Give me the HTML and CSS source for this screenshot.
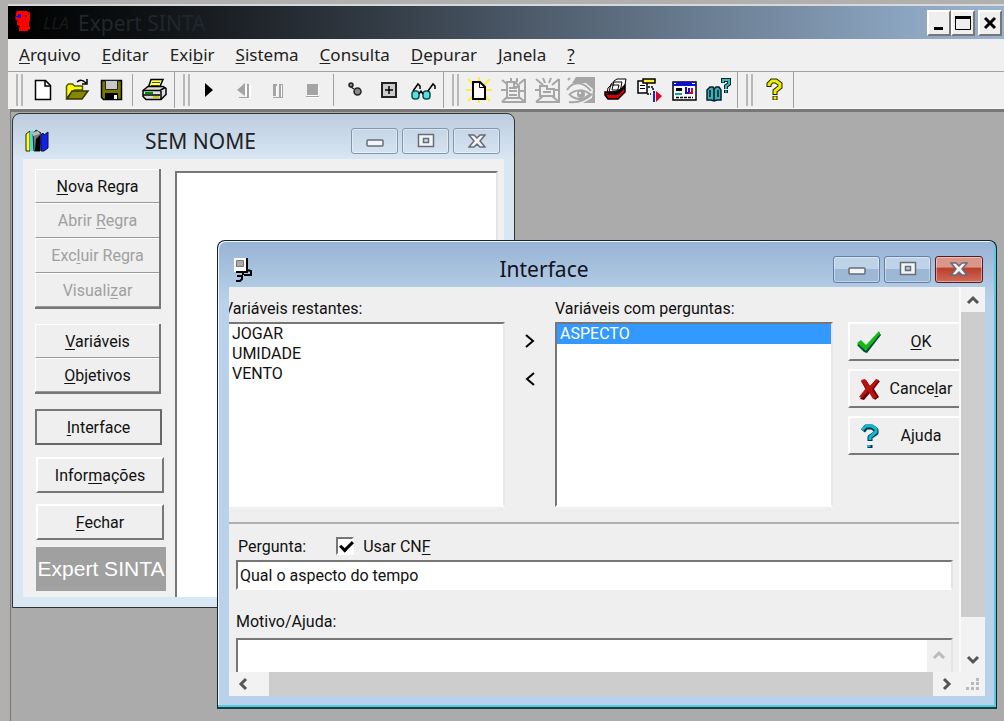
FILE: index.html
```html
<!DOCTYPE html>
<html lang="pt-BR">
<head>
<meta charset="utf-8">
<title>Expert SINTA</title>
<link rel="stylesheet" href="styles.css">
</head>
<body>
<div class="app">
  <header class="app-title">
    <svg class="head-icon" width="20" height="22" viewBox="0 0 20 22" aria-hidden="true"><path fill="#f00" d="M4 1h10l3 2v7l-1 3v3l1 1v2l-3 2H6v-3l1-2-3-1v-3l1-1-3-2 1-3V3z"/><path fill="#20d" d="M2 6h3V4h3v4H5V7H2z"/><path fill="#600" d="M12 5h2v2h-2z"/></svg>
    <span class="app-mark">LLA</span>
    <h1 class="app-name">Expert SINTA</h1>
    <div class="app-controls">
      <button class="sys" aria-label="Minimizar"><svg width="18" height="18" viewBox="0 0 18 18"><path d="M4 13h9v3H4z"/></svg></button>
      <button class="sys" aria-label="Maximizar"><svg width="18" height="18" viewBox="0 0 18 18"><path fill="none" stroke="#000" d="M1.500 3.500h15v12h-15z"/><path d="M1 2h16v3H1z"/></svg></button>
      <button class="sys sys-close" aria-label="Fechar"><svg width="18" height="18" viewBox="0 0 18 18"><path fill="none" stroke="#000" stroke-width="3" d="M4 4l10 10M14 4L4 14"/></svg></button>
    </div>
  </header>
  <nav class="menu">
    <button><u>A</u>rquivo</button>
    <button><u>E</u>ditar</button>
    <button>Exi<u>b</u>ir</button>
    <button><u>S</u>istema</button>
    <button><u>C</u>onsulta</button>
    <button><u>D</u>epurar</button>
    <button><u>J</u>anela</button>
    <button><u>?</u></button>
  </nav>
  <div class="toolbar" role="toolbar">
    <div class="group">
      <span class="grip"></span>
      <button class="tool" aria-label="Novo"><svg width="28" height="28" viewBox="0 0 28 28"><path fill="#fff" stroke="#000" stroke-width="1.500" d="M6.500 4.500h10l5 5v14h-15z"/><path fill="none" stroke="#000" stroke-width="1.500" d="M16 4.500v5.500h5.500"/></svg></button>
      <button class="tool" aria-label="Abrir"><svg width="28" height="28" viewBox="0 0 28 28"><path fill="#ff0" stroke="#550" stroke-width="1.500" d="M3.500 22V10l2-2h4l2 2h8v4h-8z"/><path fill="#880" stroke="#330" stroke-width="1.500" d="M4 23l5-8h16l-6 8z"/><path fill="none" stroke="#000" stroke-width="1.500" d="M14 6c3-3 6-2 9 1m1-4v5h-5"/></svg></button>
      <button class="tool" aria-label="Salvar"><svg width="28" height="28" viewBox="0 0 28 28"><path fill="#770" stroke="#000" stroke-width="1.500" d="M4.500 4.500h20v19h-18l-2-2z"/><path fill="#c8c8c8" stroke="#222" d="M8.500 4.500h12v9h-12z"/><path fill="#000" d="M8 17h13v7H8z"/><path fill="#fff" d="M17 19h3v4h-3z"/></svg></button>
      <span class="sep"></span>
      <button class="tool" aria-label="Imprimir"><svg width="28" height="28" viewBox="0 0 28 28"><path fill="#ff6" stroke="#000" stroke-width="1.500" d="M11 3.500h12l-4 9H8z"/><path stroke="#550" d="M12 6.500h8M11 9.500h8"/><path fill="#ddd" stroke="#000" stroke-width="1.500" d="M3 14.500l5-4h15l3 2v6l-5 5H6l-3-3z"/><path stroke="#000" stroke-width="1.500" fill="none" d="M3 14.500h17l5-3M21 15v8M3 19h17"/><path fill="#080" d="M5 16h8v2H5z"/><path fill="#cc0" d="M13 20h6v2h-6z"/></svg></button>
    </div>
    <div class="group">
      <span class="grip"></span>
      <button class="tool" aria-label="Executar"><svg width="28" height="28" viewBox="0 0 28 28"><path d="M9 7l8 7-8 7z"/></svg></button>
      <button class="tool" aria-label="Voltar" disabled><svg width="28" height="28" viewBox="0 0 28 28"><path fill="#fff" d="M17 9l-8 6 8 6zM18 9h3v14h-3z"/><path fill="#a4a4a4" d="M15 7l-8 7 8 6zM17 8h2v14H9v-1h8z"/></svg></button>
      <button class="tool" aria-label="Pausar" disabled><svg width="28" height="28" viewBox="0 0 28 28"><path fill="#a4a4a4" d="M9 8h4v12H9zM15 8h4v14H9v-1h6z"/><path fill="#fff" d="M12 10h1v10h-1zM17 9h1v12h-1z"/></svg></button>
      <button class="tool" aria-label="Parar" disabled><svg width="28" height="28" viewBox="0 0 28 28"><path fill="#fff" d="M9 10h12v12H9z"/><path fill="#a4a4a4" d="M9 8h11v11H9zM8 20h13v1H8z"/></svg></button>
      <span class="sep"></span>
      <button class="tool" aria-label="Passo"><svg width="28" height="28" viewBox="0 0 28 28"><g fill="#888" stroke="#222" stroke-width="1.500"><circle cx="10" cy="9" r="2"/><path d="M10 11l3 2"/><circle cx="16.500" cy="15.500" r="3.500"/></g></svg></button>
      <button class="tool" aria-label="Adicionar"><svg width="28" height="28" viewBox="0 0 28 28"><path fill="#ccc" stroke="#222" stroke-width="2" d="M7 7h14v14H7z"/><path stroke="#000" stroke-width="1.500" d="M14 10v8M10 14h8"/></svg></button>
      <button class="tool" aria-label="Observar"><svg width="28" height="28" viewBox="0 0 28 28"><g fill="#6dd" stroke="#055" stroke-width="1.500"><rect x="3" y="15" width="7" height="8" rx="3"/><rect x="14" y="15" width="7" height="8" rx="3"/></g><path fill="none" stroke="#000" stroke-width="1.500" d="M4 15l5-7 2 2v3M10 18l2-3 2 3M19 15l5-7 2 2v3"/></svg></button>
    </div>
    <div class="group">
      <span class="grip"></span>
      <button class="tool" aria-label="Nova base"><svg width="28" height="28" viewBox="0 0 28 28"><path stroke="#fe3" stroke-width="2" d="M3 3l22 22M25 3L3 25M14 1v26M1 14h26"/><path fill="#fff" stroke="#000" stroke-width="2" d="M8 6h7l5 5v12H8z"/><path fill="none" stroke="#000" d="M14.500 6v5.500H20"/></svg></button>
      <button class="tool" aria-label="Variáveis" disabled><svg width="28" height="28" viewBox="0 0 28 28"><g fill="none" stroke="#a6a6a6" stroke-width="2"><path d="M3 4l5 4M26 3l-6 5M2 14h6M20 15h6M3 26l5-5M26 26l-6-5M12 2v4M18 2v4M3 26h23V3"/><path d="M8 6h8l4 4v12H8zM10 12h8M10 15h8M10 19h8M15 6v5h5"/></g></svg></button>
      <button class="tool" aria-label="Objetivos" disabled><svg width="28" height="28" viewBox="0 0 28 28"><g fill="none" stroke="#a6a6a6" stroke-width="2"><path d="M3 3l7 6M26 3l-7 6M2 14h5M21 14h5M3 26l7-6M26 26l-7-6M10 2l2 5M18 2l-2 5M3 26h23V3"/><path d="M7 10h7v3h7v7H7zM10 16h8"/></g></svg></button>
      <button class="tool" aria-label="Visualizar" disabled><svg width="30" height="28" viewBox="0 0 30 28"><path fill="#a6a6a6" d="M10 1h19v26H17l9-5 1-9-7-6H6z"/><path fill="none" stroke="#a6a6a6" stroke-width="2" d="M1 14c6-9 16-9 24 1M3 19c6-6 14-6 21-1-7 7-14 6-20 1M3 26c9 1 16-1 23-8M2 4l2-2"/><circle cx="15" cy="18" r="4" fill="#a6a6a6"/><circle cx="14" cy="17" r="1" fill="#fff"/></svg></button>
      <button class="tool" aria-label="Regras"><svg width="28" height="28" viewBox="0 0 28 28"><path fill="#fff" stroke="#000" d="M13 5l3-2h9l-2 11H11zM10 8l3-2h8l-2 10H8zM7 12l3-3h8l-2 8H6z"/><path fill="#d00" stroke="#000" stroke-width="1.500" d="M4 16h13l7-7v7l-7 7H7l-3-4z"/><path stroke="#000" d="M4 18.500h13l7-7"/></svg></button>
      <button class="tool" aria-label="Depurar"><svg width="28" height="28" viewBox="0 0 28 28"><path fill="#fff" stroke="#000" stroke-width="1.500" d="M3 5h9v12H3z"/><path stroke="#000" d="M5 9.500h5M5 12.500h5"/><path fill="#fe3" stroke="#000" stroke-width="1.500" d="M8 3h12v4H8z"/><path fill="none" stroke="#000" stroke-dasharray="2 1" stroke-width="1.500" d="M13 11h5v4M12 18h4"/><path fill="#22c" d="M18 15h2v11h-2z"/><path fill="#d02" d="M21 15l6 5-6 6z"/></svg></button>
      <button class="tool" aria-label="Interface"><svg width="28" height="28" viewBox="0 0 28 28"><path fill="#fff" stroke="#000" stroke-width="1.500" d="M4 6h23v18H4z"/><path fill="#11c" d="M4 6h23v4H4z"/><path stroke="#fff" d="M5 7.500h2M23 7.500h3"/><path fill="#000" d="M7 12h6v3H7z"/><path fill="#0aa" d="M6 17h7v2H6z"/><path fill="none" stroke="#11c" stroke-width="2" d="M17 11v6h3v-5"/><path fill="none" stroke="#d02" stroke-width="2" d="M20 17h3v-5"/><path stroke="#000" stroke-dasharray="3 1" stroke-width="1.500" d="M7 21.500h17"/></svg></button>
      <button class="tool" aria-label="Tópicos"><svg width="28" height="28" viewBox="0 0 28 28"><path fill="#4aa" stroke="#023" stroke-width="1.500" d="M4 24V14l3-3h3l1 2 2-2h3l2 3v10h-4l-3 1-3-1z"/><path stroke="#023" stroke-width="1.500" d="M11 13v11M7 14v7M15 14v7"/><path fill="none" stroke="#022" stroke-width="4" d="M20 7V4h6v4l-3 2v3M23 14v3"/><path fill="none" stroke="#3bb" stroke-width="2" d="M20 6.500V4h6v4l-3 2v3M23 14.500v2"/></svg></button>
    </div>
    <div class="group">
      <span class="grip"></span>
      <button class="tool" aria-label="Ajuda"><svg width="28" height="28" viewBox="0 0 28 28"><path fill="none" stroke="#220" stroke-width="5" d="M10 11V8l3-3h4l4 3v3l-5 4v4M16 20v4"/><path fill="none" stroke="#ee0" stroke-width="3" d="M10 10V8l3-3h4l4 3v3l-5 4v3M16 20.500v3"/></svg></button>
    </div>
  </div>

  <main class="desktop">
    <section class="window base" aria-label="SEM NOME">
      <header class="caption">
        <svg width="27" height="24" viewBox="-1 0 27 24" aria-hidden="true"><path fill="#ff2" stroke="#222" d="M2 5l4-3v20H2z"/><path fill="#4dd" d="M6 2h4v20H6z"/><path fill="#777" stroke="#222" d="M9 5l3-4 5 3-1 18H10z"/><path fill="#bbb" d="M8 4l6-2 2 3-7 2z"/><path fill="#000" d="M12 10l4-4v16h-5z"/><path fill="#12e" stroke="#113" d="M17 6l2-2 1 2 4-3v16l-4 3h-3z"/></svg>
        <h2>SEM NOME</h2>
        <div class="win-controls">
          <button class="wc" aria-label="Minimizar"><svg width="18" height="16" viewBox="0 0 18 16"><rect x="1" y="7" width="16" height="6" rx="1"/></svg></button>
          <button class="wc" aria-label="Maximizar"><svg width="18" height="16" viewBox="0 0 18 16"><path fill-rule="evenodd" d="M1.500 1.500h15v12h-15zM6.500 5.500v4h5v-4z"/></svg></button>
          <button class="wc" aria-label="Fechar"><svg width="18" height="16" viewBox="0 0 18 16"><path d="M1 2h5l3 3 3-3h5l-5 6 5 6h-5l-3-3-3 3H1l5-6z"/></svg></button>
        </div>
      </header>
      <div class="base-client">
        <div class="side">
          <div class="stack">
            <button class="btn"><span><u>N</u>ova Regra</span></button>
            <button class="btn" disabled><span>Abrir <u>R</u>egra</span></button>
            <button class="btn" disabled><span>Exc<u>l</u>uir Regra</span></button>
            <button class="btn" disabled><span>Visuali<u>z</u>ar</span></button>
          </div>
          <div class="stack">
            <button class="btn"><span><u>V</u>ariáveis</span></button>
            <button class="btn"><span><u>O</u>bjetivos</span></button>
          </div>
          <button class="btn btn-focus"><span><u>I</u>nterface</span></button>
          <button class="btn btn-wide"><span>Infor<u>m</u>ações</span></button>
          <button class="btn btn-wide"><span><u>F</u>echar</span></button>
          <div class="brand">Expert SINTA</div>
        </div>
        <div class="rules" role="listbox" aria-label="Regras"></div>
      </div>
    </section>

    <section class="window dialog" aria-label="Interface">
      <header class="caption">
        <svg width="22" height="25" viewBox="0 0 22 25" aria-hidden="true"><path fill="#fff" d="M1 1h12v14H1z"/><path fill="#aaa" stroke="#777" d="M3.500 3.500h7v6h-7z"/><path fill="none" stroke="#000" stroke-width="2" d="M14 1v14H3M10 15v3M4 19h5v3l-2 2H3M14 13l4 1v4h-7"/></svg>
        <h2>Interface</h2>
        <div class="win-controls">
          <button class="wc" aria-label="Minimizar"><svg width="18" height="16" viewBox="0 0 18 16"><rect x="1" y="7" width="16" height="6" rx="1"/></svg></button>
          <button class="wc" aria-label="Maximizar"><svg width="18" height="16" viewBox="0 0 18 16"><path fill-rule="evenodd" d="M1.500 1.500h15v12h-15zM6.500 5.500v4h5v-4z"/></svg></button>
          <button class="wc wc-close" aria-label="Fechar"><svg width="18" height="16" viewBox="0 0 18 16"><path d="M1 2h5l3 3 3-3h5l-5 6 5 6h-5l-3-3-3 3H1l5-6z"/></svg></button>
        </div>
      </header>
      <div class="dialog-client">
        <div class="view">
          <div class="picker">
            <div class="column">
              <span class="label label-cut" id="rest">Variáveis restantes:</span>
              <ul class="list list-cut" role="listbox" aria-labelledby="rest">
                <li role="option">JOGAR</li>
                <li role="option">UMIDADE</li>
                <li role="option">VENTO</li>
              </ul>
            </div>
            <div class="movers">
              <button aria-label="Adicionar"><svg width="12" height="16" viewBox="0 0 12 16"><path d="M2 2l7 6-7 6"/></svg></button>
              <button aria-label="Remover"><svg width="12" height="16" viewBox="0 0 12 16"><path d="M10 2L3 8l7 6"/></svg></button>
            </div>
            <div class="column">
              <span class="label" id="com">Variáveis com perguntas:</span>
              <ul class="list" role="listbox" aria-labelledby="com">
                <li role="option" aria-selected="true">ASPECTO</li>
              </ul>
            </div>
            <div class="actions">
              <button class="action"><svg width="28" height="28" viewBox="0 0 28 28"><path fill="#044" d="M2 17l4-3 5 5L24 4l2 3-14 18-3-1z"/><path fill="#1b1" d="M2 15l4-3 5 5L24 3l1 3-14 17z"/></svg><span><u>O</u>K</span></button>
              <button class="action"><svg width="28" height="28" viewBox="0 0 28 28"><path fill="#600" d="M6 6l5-1 4 6 6-6 4 1-6 8 5 8-4 3-5-7-6 7-4-1 6-9z"/><path fill="#b11" d="M6 5l4-1 5 7 6-7 3 1-7 9 5 8-4 2-5-8-6 7-3-1 7-9z"/></svg><span>Cance<u>l</u>ar</span></button>
              <button class="action"><svg width="28" height="28" viewBox="0 0 28 28"><path fill="none" stroke="#035" stroke-width="5" stroke-linejoin="round" d="M8 9l3-4h6l4 3v3l-6 4v4M15 23v3"/><path fill="none" stroke="#1bc" stroke-width="3" stroke-linejoin="round" d="M7 8l4-4h6l4 3v3l-6 5v3M14 23v2"/></svg><span>Ajuda</span></button>
            </div>
          </div>
          <div class="form">
            <div class="row">
              <label for="pergunta">Pergunta:</label>
              <input class="check" type="checkbox" id="cnf" checked>
              <label for="cnf">Usar CN<u>F</u></label>
            </div>
            <input class="field" type="text" id="pergunta" value="Qual o aspecto do tempo">
            <label class="motive" for="motivo">Motivo/Ajuda:</label>
            <div class="memo">
              <textarea id="motivo"></textarea>
              <button class="arrow arrow-dim" aria-label="Subir texto"><svg width="14" height="10" viewBox="0 0 14 10"><path d="M2 8l5-5 5 5"/></svg></button>
            </div>
          </div>
        </div>
        <div class="vbar">
          <button class="arrow" aria-label="Subir"><svg width="14" height="10" viewBox="0 0 14 10"><path d="M2 8l5-5 5 5"/></svg></button>
          <div class="vthumb"></div>
          <button class="arrow" aria-label="Descer"><svg width="14" height="10" viewBox="0 0 14 10"><path d="M2 2l5 5 5-5"/></svg></button>
        </div>
        <div class="hbar">
          <button class="arrow" aria-label="Esquerda"><svg width="10" height="14" viewBox="0 0 10 14"><path d="M8 2L3 7l5 5"/></svg></button>
          <div class="hthumb"></div>
          <button class="arrow" aria-label="Direita"><svg width="10" height="14" viewBox="0 0 10 14"><path d="M2 2l5 5-5 5"/></svg></button>
        </div>
        <svg class="size-grip" width="14" height="14" viewBox="0 0 14 14" aria-hidden="true"><path fill="#b8b8b8" d="M10 1h3v3h-3zM5 5h3v3H5zM10 5h3v3h-3zM0 10h3v3H0zM5 10h3v3H5zM10 10h3v3h-3z"/></svg>
      </div>
    </section>
  </main>
</div>
</body>
</html>
```
FILE: styles.css
```css
* { box-sizing: border-box; }

body {
  margin: 0;
  min-height: 100vh;
  background: #b2b0ae;
  color: #111;
  font-family: Roboto, "Liberation Sans", sans-serif;
  font-size: 16px;
  overflow: hidden;
}

button {
  margin: 0;
  padding: 0;
  border: 0;
  background: none;
  color: inherit;
  font: inherit;
}

h1, h2, ul { margin: 0; padding: 0; font-weight: 400; }
svg { display: block; flex: none; }
u { text-underline-offset: 2px; text-decoration-thickness: 1px; }

.app {
  display: flex;
  flex-direction: column;
  height: 100vh;
  padding: 4px 0 0 8px;
}

/* Main title bar */
.app-title {
  display: flex;
  align-items: center;
  height: 35px;
  padding: 0 2px 0 5px;
  border-top: 2px solid #d5d9dc;
  background: linear-gradient(90deg, #000 0, #0c0e10 12%, #2f3740 35%, #5a6a7c 60%, #8ba4bf 90%, #9ab4d0 100%);
  font-family: "Noto Sans", sans-serif;
}
.head-icon { margin-bottom: 4px; }
.app-mark { width: 45px; padding-left: 10px; font-size: 17px; font-style: italic; color: #191919; }
.app-name { flex: 1; font-size: 21px; color: #20262c; }
.app-controls { display: flex; }
.sys {
  display: flex;
  align-items: center;
  justify-content: center;
  width: 24px;
  height: 26px;
  border: 2px solid;
  border-color: #fff #777 #777 #fff;
  background: #efefef;
}
.sys-close { margin-left: 3px; }

/* Menu */
.menu {
  display: flex;
  gap: 21px;
  height: 32px;
  padding: 0 11px 2px;
  background: #f0f0f0;
  color: #222;
  font-family: "Noto Sans", sans-serif;
  font-size: 17px;
}

/* Toolbar */
.toolbar {
  display: flex;
  height: 38px;
  border-top: 1px solid #a0a0a0;
  border-bottom: 1px solid #fafafa;
  background: #f0f0f0;
}
.group {
  display: flex;
  align-items: center;
  padding: 0 3px 0 8px;
  border-right: 1px solid #a0a0a0;
}
.grip {
  width: 7px;
  height: 32px;
  margin-right: 3px;
  border: solid #b8b8b8;
  border-width: 0 2px;
}
.tool {
  display: flex;
  align-items: center;
  justify-content: center;
  width: 34px;
  height: 34px;
}
.sep { width: 1px; height: 32px; margin: 0 4px; background: #a0a0a0; }

/* Workspace */
.desktop {
  position: relative;
  flex: 1;
  margin-left: 2px;
  border-top: 3px solid #777;
  border-left: 1px solid #777;
  background: #ababab;
}
.window {
  position: absolute;
  display: flex;
  flex-direction: column;
  border: 1px solid #333;
  border-radius: 8px 8px 0 0;
}
.caption { display: flex; align-items: center; font-family: "Noto Sans", sans-serif; }
.caption h2 { flex: 1; text-align: center; font-size: 21px; color: #222; }
.win-controls { display: flex; gap: 4px; }
.wc {
  display: flex;
  align-items: center;
  justify-content: center;
  width: 47px;
  height: 27px;
  border: 1px solid #8496ae;
  border-radius: 3px;
  box-shadow: inset 0 0 0 1px #ffffff66;
}
.wc svg { fill: #f4f4f4; stroke: #666c78; stroke-width: 1.5; }

/* Rule base window */
.base {
  left: 1px;
  top: 1px;
  width: 503px;
  height: 495px;
  padding: 0 10px 10px;
  background: linear-gradient(#bccddf, #d9e6f3 45px);
}
.base .caption { height: 45px; padding: 8px 4px 0 0; }
.base .wc { height: 26px; }
.base-client { display: flex; flex: 1; gap: 9px; padding-right: 6px; background: #f0f0f0; }
.side { display: flex; flex-direction: column; width: 143px; padding: 10px 0 0 12px; }
.stack { display: flex; flex-direction: column; width: 126px; margin-bottom: 15px; border: solid #777; border-width: 0 2px 2px 0; }
.btn {
  height: 36px;
  width: 127px;
  border: 2px solid;
  border-color: #fff #777 #777 #fff;
  background: #efefef;
}
.btn:disabled { color: #a0a0a0; }
.stack .btn { width: 124px; height: 35px; border-width: 1px 0 1px 1px; border-color: #fff #888 #999 #fff; }
.stack .btn:first-child, .stack .btn:last-child { height: 34px; }
.btn-focus { border-color: #777 #666 #666 #777; margin-bottom: 12px; }
.btn-wide { width: 128px; margin: 0 0 11px 1px; }
.brand {
  width: 130px;
  margin: -4px 0 0 1px;
  background: #a0a0a0;
  color: #fff;
  font: 21px/44px "Liberation Sans", sans-serif;
  text-align: center;
  white-space: nowrap;
}
.rules { flex: 1; margin-top: 12px; border: 2px solid; border-color: #777 #e4e4e4 #fff #777; border-bottom: 0; background: #fff; }

/* Interface window */
.dialog {
  left: 206px;
  top: 128px;
  width: 780px;
  height: 469px;
  padding: 0 11px;
  border-color: #123;
  border-bottom: 2px solid #144;
  box-shadow: inset -2px -2px #5cd, inset 1px 1px #eef6ff;
  background: linear-gradient(#98b4d4, #b9d1ea 60px);
}
.dialog .caption { height: 46px; padding: 10px 2px 0 4px; }
.dialog .caption h2 { color: #112; }
.dialog .wc { background: linear-gradient(#bed2e8 50%, #9db8d6 50%); border-color: #6580a2; }
.dialog .wc-close { background: linear-gradient(#d9968b 40%, #bc3e2c 45%, #cf6a58); border-color: #5a1a1a; width: 48px; }
.dialog-client {
  display: grid;
  grid-template: 385px 24px / 1fr 24px;
  background: #f2f2f2;
}
.view { overflow: hidden; background: #efefef; border-right: 2px solid #fafafa; }
.picker { display: flex; height: 237px; padding-top: 12px; border-bottom: 2px solid #b0b0b0; }
.column { display: flex; flex-direction: column; width: 278px; }
.column:first-child { width: 276px; }
.label { line-height: 20px; margin-bottom: 3px; white-space: nowrap; }
.label-cut { text-indent: -6px; overflow: hidden; }
.list { height: 185px; border: 2px solid; border-color: #777 #e8e8e8 #fff #777; background: #fff; list-style: none; }
.list-cut { border-left: 0; }
.list li { padding-left: 3px; line-height: 20px; }
.list [aria-selected="true"] { background: #39f; color: #fff; }
.movers { display: flex; flex-direction: column; align-items: center; gap: 10px; width: 50px; padding-top: 28px; }
.movers button { padding: 6px; }
.movers path { fill: none; stroke: #000; stroke-width: 2; }
.actions { display: flex; flex-direction: column; gap: 8px; flex: 1; padding: 23px 0 0 15px; }
.action {
  display: flex;
  align-items: center;
  height: 39px;
  padding-left: 5px;
  border: solid;
  border-width: 2px 0 2px 2px;
  border-color: #fff #777 #777 #fff;
  background: #efefef;
}
.action span { flex: 1; text-align: center; }
.form { display: flex; flex-direction: column; padding: 10px 6px 0 7px; }
.row { display: flex; align-items: center; height: 24px; padding-left: 2px; }
.check {
  appearance: none;
  width: 18px;
  height: 18px;
  margin: 0 9px 0 30px;
  border: 2px solid;
  border-color: #777 #fff #fff #777;
  background: #fff;
}
.check:checked::after {
  content: "";
  display: block;
  width: 10px;
  height: 5px;
  margin: 2px;
  border: solid #000;
  border-width: 0 0 3px 3px;
  transform: rotate(-45deg);
}
.field {
  width: 100%;
  height: 30px;
  margin-top: 2px;
  padding: 0 2px;
  border: 2px solid;
  border-color: #777 #e4e4e4 #fff #777;
  background: #fff;
  color: #111;
  font: inherit;
}
.motive { margin-top: 20px; line-height: 24px; }
.memo { display: flex; height: 60px; margin-top: 4px; border: 2px solid; border-color: #777 #e4e4e4 #fff #777; background: #fff; }
.memo textarea { flex: 1; border: 0; padding: 2px; background: #fff; font: inherit; resize: none; }
.arrow { display: flex; align-items: center; justify-content: center; width: 24px; height: 25px; }
.arrow path { fill: none; stroke: #555; stroke-width: 3; }
.arrow-dim { height: 56px; padding-bottom: 26px; background: #f0f0f0; }
.arrow-dim path { stroke: #bbb; }
.vbar { display: flex; flex-direction: column; }
.vthumb { flex: 1; margin-bottom: 30px; background: #cdcdcd; }
.hbar { display: flex; align-items: center; }
.hbar .arrow { width: 28px; }
.hthumb { flex: 1; height: 24px; margin-left: 12px; background: #cdcdcd; }
.size-grip { place-self: center; }
```
